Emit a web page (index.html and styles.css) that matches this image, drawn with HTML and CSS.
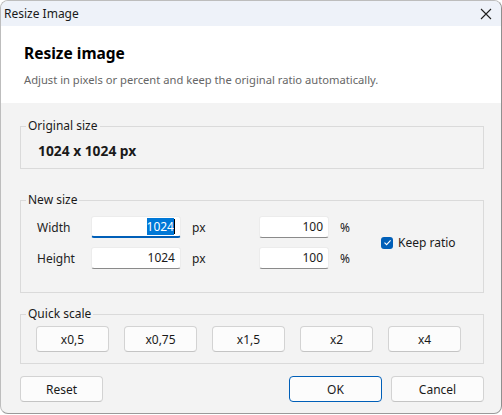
FILE: index.html
```html
<!DOCTYPE html>
<html lang="en">
<head>
    <meta charset="UTF-8">
    <title>Resize Image</title>
    <link rel="stylesheet" href="styles.css">
</head>
<body>

<div class="window">
    <!-- 타이틀 바 -->
    <div class="titlebar">
        <span class="title">Resize Image</span>
        <svg class="close" width="12" height="12" viewBox="0 0 12 12">
            <path d="M1 1 L11 11 M11 1 L1 11" stroke="#1f1f1f" stroke-width="1.1" fill="none"/>
        </svg>
    </div>

    <div class="header">
        <h1>Resize image</h1>
        <p>Adjust in pixels or percent and keep the original ratio automatically.</p>
    </div>

    <div class="content">
        <fieldset class="group group-original">
            <legend>Original size</legend>
            <div class="original-value">1024 x 1024 px</div>
        </fieldset>

        <fieldset class="group group-new">
            <legend>New size</legend>
            <div class="size-grid">
                <div class="label">Width</div>
                <div class="field focused"><span class="sel">1024</span><span class="caret"></span></div>
                <div class="unit">px</div>
                <div class="field">100</div>
                <div class="unit">%</div>
                <label class="keep">
                    <span class="check">
                        <svg width="9" height="9" viewBox="0 0 9 9">
                            <path d="M1.5 4.6 L3.6 6.6 L7.6 2.4" stroke="#fff" stroke-width="1.1" fill="none"/>
                        </svg>
                    </span>
                    Keep ratio
                </label>

                <div class="label">Height</div>
                <div class="field">1024</div>
                <div class="unit">px</div>
                <div class="field">100</div>
                <div class="unit">%</div>
            </div>
        </fieldset>

        <fieldset class="group group-quick">
            <legend>Quick scale</legend>
            <div class="quick-row">
                <button class="btn">x0,5</button>
                <button class="btn">x0,75</button>
                <button class="btn">x1,5</button>
                <button class="btn">x2</button>
                <button class="btn">x4</button>
            </div>
        </fieldset>

        <div class="footer">
            <button class="btn btn-wide">Reset</button>
            <div class="footer-right">
                <button class="btn btn-wide btn-default">OK</button>
                <button class="btn btn-wide">Cancel</button>
            </div>
        </div>
    </div>
</div>

</body>
</html>
```

FILE: styles.css
```css
body {
    margin: 0;
    font-family: "Noto Sans", "Open Sans", sans-serif;
    font-size: 12px;
    color: #1a1a1a;
    background: #ffffff;
}
.window {
    width: 500px;
    height: 412px;
    border: 1px solid #bdbdbd;
    border-right-color: #8f8f8f;
    border-bottom-color: #9a9a9a;
    border-radius: 8px;
    overflow: hidden;
    background: #f3f3f3;
}
/* 타이틀 바 */
.titlebar {
    height: 25px;
    background: #eef2f9;
    display: flex;
    align-items: center;
    justify-content: space-between;
    padding: 0 9px 0 3px;
}
.title {
    font-size: 12px;
}
.header {
    background: #ffffff;
    height: 77px;
    padding: 0 23px;
    box-sizing: border-box;
    overflow: hidden;
}
.header h1 {
    margin: 0;
    padding-top: 16px;
    font-size: 15.5px;
    font-weight: bold;
    line-height: 22px;
    color: #000;
}
.header p {
    margin: 8px 0 0;
    font-size: 11.2px;
    color: #666666;
    line-height: 16px;
}
.content {
    padding: 16px 17px 0 19px;
}
/* 그룹 박스 */
.group {
    margin: 0;
    border: 1px solid #dadada;
    padding: 0 16px;
    min-width: 0;
}
.group legend {
    padding: 0 2px;
    margin-left: -11px;
    font-size: 12px;
    line-height: 14px;
}
.group-original {
    height: 50px;
    box-sizing: border-box;
}
.original-value {
    font-weight: bold;
    font-size: 13.8px;
    margin-top: 8px;
    padding-left: 1px;
}
.group-new {
    margin-top: 24px;
    padding-bottom: 23px;
}
.size-grid {
    display: grid;
    grid-template-columns: 54px 90px 78px 70px 52px auto;
    grid-template-rows: 22px 22px;
    row-gap: 9px;
    margin-top: 9px;
    align-items: center;
}
.label {
    color: #222;
}
.field {
    height: 22px;
    box-sizing: border-box;
    background: #ffffff;
    border: 1px solid #ececec;
    border-bottom: 1px solid #8a8a8a;
    border-radius: 3px;
    text-align: right;
    padding: 0 5px;
    line-height: 20px;
}
.field.focused {
    border-bottom: 2px solid #005fb8;
}
.sel {
    background: #0078d7;
    color: #ffffff;
}
.caret {
    display: inline-block;
    width: 1px;
    height: 15px;
    background: #000;
    vertical-align: -3px;
}
.unit {
    padding-left: 11px;
}
.keep {
    grid-column: 6;
    grid-row: 1 / 3;
    display: flex;
    align-items: center;
    gap: 5px;
}
.check {
    width: 12px;
    height: 12px;
    border-radius: 3px;
    background: #005fb8;
    display: flex;
    align-items: center;
    justify-content: center;
}
.group-quick {
    margin-top: 14px;
    padding-bottom: 11px;
}
.quick-row {
    display: grid;
    grid-template-columns: repeat(5, 73px);
    column-gap: 15px;
    margin-top: 5px;
    margin-left: -1px;
}
/* 버튼 스타일 */
.btn {
    font-family: inherit;
    font-size: 12px;
    color: #1a1a1a;
    height: 26px;
    background: #fcfcfc;
    border: 1px solid #d3d3d3;
    border-bottom-color: #c4c4c4;
    border-radius: 4px;
    padding: 0;
}
.footer {
    display: flex;
    justify-content: space-between;
    margin-top: 12px;
}
.footer-right {
    display: flex;
    gap: 9px;
}
.btn-wide {
    width: 83px;
}
.footer-right .btn-wide {
    width: 93px;
}
.btn-default {
    border: 1px solid #005fb8;
}
```
